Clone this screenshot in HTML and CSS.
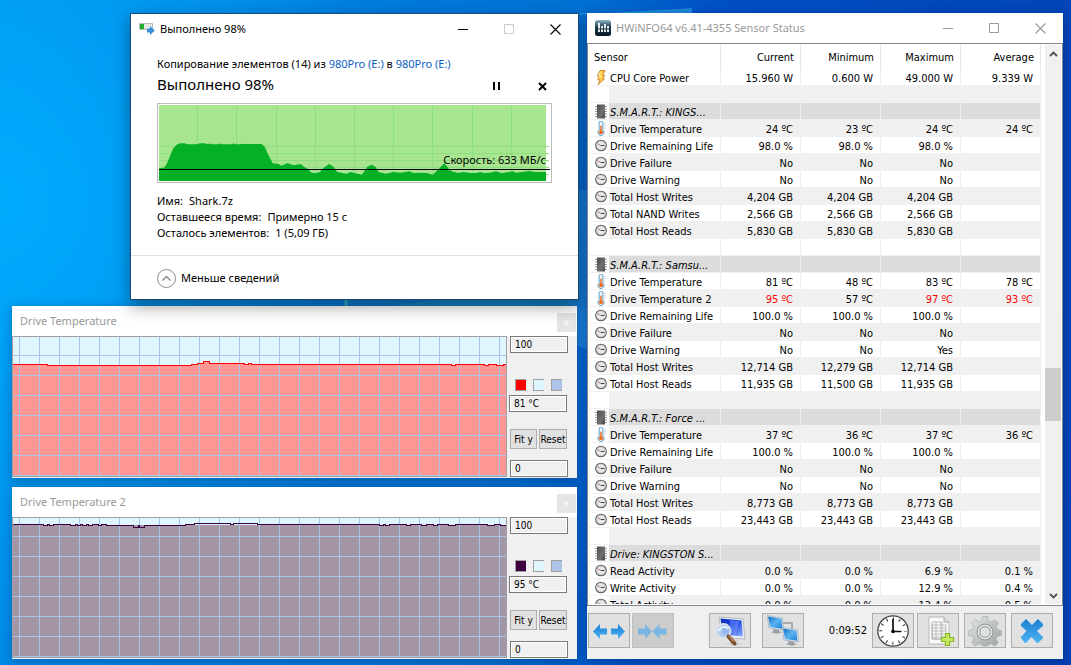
FILE: index.html
```html
<!DOCTYPE html>
<html lang="ru">
<head>
<meta charset="utf-8">
<title>Drive monitoring desktop</title>
<link rel="stylesheet" href="styles.css">
</head>
<body>
<svg class="defs" aria-hidden="true">
  <defs>
    <linearGradient id="g-chip" x1="0" y1="0" x2="1" y2="1"><stop offset="0" stop-color="#4c4c4c"/><stop offset=".6" stop-color="#707070"/><stop offset="1" stop-color="#484848"/></linearGradient>
    <linearGradient id="g-arrow" x1="0" y1="0" x2="0" y2="1"><stop offset="0" stop-color="#1b7fd0"/><stop offset="1" stop-color="#4db4f5"/></linearGradient>
    <linearGradient id="g-screen" x1="0" y1="0" x2="1" y2="1"><stop offset="0" stop-color="#0b2fb8"/><stop offset=".45" stop-color="#1a3fe0"/><stop offset="1" stop-color="#8fb4ff"/></linearGradient>
    <linearGradient id="g-mon" x1="0" y1="0" x2="1" y2="1"><stop offset="0" stop-color="#0f6fc8"/><stop offset=".5" stop-color="#5ab4f0"/><stop offset="1" stop-color="#1f80d8"/></linearGradient>
    <linearGradient id="g-gear" x1="0" y1="0" x2="1" y2="1"><stop offset="0" stop-color="#e4e8e8"/><stop offset="1" stop-color="#9ba2a2"/></linearGradient>
    <linearGradient id="g-app" x1="0" y1="0" x2="0" y2="1"><stop offset="0" stop-color="#8fb8cc"/><stop offset=".45" stop-color="#1c3848"/><stop offset="1" stop-color="#0a1a24"/></linearGradient>
    <symbol id="i-chip" viewBox="0 0 12 14"><path d="M0 2h12M0 4.500h12M0 7h12M0 9.500h12M0 12h12" stroke="#9a9a9a"/><rect x="2" width="8" height="14" fill="url(#g-chip)"/></symbol>
    <symbol id="i-temp" viewBox="0 0 12 16"><path d="M4 2a2 2 0 0 1 4 0v7.500a3.300 3.300 0 1 1-4 0z" fill="#e8f6fd" stroke="#5b9cc4"/><circle cx="6" cy="12" r="2.200" fill="#f26a1b"/><path d="M6 12V5" stroke="#f26a1b" stroke-width="1.600"/><path d="M9 2.500h2M9 5h2M9 7.500h2" stroke="#b9cfdd"/></symbol>
    <symbol id="i-clock" viewBox="0 0 14 14"><circle cx="7" cy="7" r="6.200" fill="#e9e9e9" stroke="#606060" stroke-width="1.300"/><circle cx="7" cy="7" r="4.700" fill="none" stroke="#c8c8c8"/><path d="M7 7h4" fill="none" stroke="#444" stroke-width="1.200"/><path d="M7 7 3 5" stroke="#b06a6a"/></symbol>
    <symbol id="i-bolt" viewBox="0 0 12 16"><path d="M5 .6h5.500L7.500 5.500H10L7.700 9.500H9.500L3 15.400 5 10.500H2.500L4 6.500H2z" fill="#ffd24a" stroke="#c9781f" stroke-width=".9"/><path d="m5.500 2-2 4h2l-1 3" fill="none" stroke="#fff3b8"/></symbol>
    <symbol id="i-monitor" viewBox="1 0 17 19"><path d="M1 .5 16.500 3l1 12L3 13z" fill="#e4ecf2" stroke="#9aa8b4" stroke-width=".7"/><path d="m2 1.500 13.500 2.300.8 10L4 12z" fill="url(#g-mon)"/><path d="m7 14 6 .7v1.500l3 1-5 1.500-6-1.500 2.500-1.300z" fill="#9a9fa3"/></symbol>
    <symbol id="w-min" viewBox="0 0 11 11"><path d="M0 5.500h10" stroke="currentColor"/></symbol>
    <symbol id="w-max" viewBox="0 0 11 11"><path d="M.5.500h9v9h-9z" fill="none" stroke="currentColor"/></symbol>
    <symbol id="w-close" viewBox="0 0 11 11"><path d="m.5.500 10 10m0-10-10 10" stroke="currentColor" stroke-width="1.100"/></symbol>
  </defs>
</svg>

<main class="desktop">
  <svg class="wallpaper" viewBox="0 0 1071 665" preserveAspectRatio="none" aria-hidden="true">
    <path d="M345 180H575V310H345z" fill="#1a86c8" opacity=".45"/>
    <path d="M346 296v12" stroke="#3cc8d8" stroke-width="3" opacity=".8"/>
    <path d="M370 308 575 284v24z" fill="#2fa3dc" opacity=".35"/>
    <path d="M575 190h14v118h-14z" fill="#2a8cdc" opacity=".5"/>
    <path d="M575 308h14v42l-14-5z" fill="#2a8ce0" opacity=".6"/>
    <path d="M575 15 692 8v5H575z" fill="#34a7ea" opacity=".6"/>
  </svg>

  <section class="window graph graph-one" aria-label="Drive Temperature">
    <header class="graph-title"><h2>Drive Temperature</h2><button class="graph-close" aria-label="Close">x</button></header>
    <div class="graph-body">
      <svg class="plot" viewBox="12 336 495 141" preserveAspectRatio="none" shape-rendering="crispEdges">
        <defs><pattern id="grid1" x="19" y="355" width="20" height="20" patternUnits="userSpaceOnUse"><path d="M0 0h20v1H0zM0 0h1v20H0z" fill="#adc4e4"/></pattern></defs>
        <path d="M12 336h495v141H12z" fill="#e0f6fe"/>
        <path d="M13 364.500H47v1H191v-1h6v-1h6v-2h6v2h35v1h4v-1h3v1H451v1h4v-1h29v1h4v-1h8v1h7v-1h4V477H13z" fill="#ff9696"/>
        <path d="M12 336h495v141H12z" fill="url(#grid1)"/>
        <path d="M13 364.500H47v1H191v-1h6v-1h6v-2h6v2h35v1h4v-1h3v1H451v1h4v-1h29v1h4v-1h8v1h7v-1h4" fill="none" stroke="#f00"/>
        <path d="M12.500 336.500h494v140h-494z" fill="none" stroke="#a0a0a0"/>
      </svg>
      <div class="graph-side">
        <input class="field" aria-label="Upper limit" value="100">
        <div class="swatches"><button class="swatch swatch-red" aria-label="Line colour"></button><button class="swatch swatch-pale" aria-label="Background colour"></button><button class="swatch swatch-blue" aria-label="Grid colour"></button></div>
        <input class="field field-now" aria-label="Current value" value="81 °C" readonly>
        <div class="graph-buttons"><button>Fit y</button><button>Reset</button></div>
        <input class="field" aria-label="Lower limit" value="0">
      </div>
    </div>
  </section>

  <section class="window graph graph-two" aria-label="Drive Temperature 2">
    <header class="graph-title"><h2>Drive Temperature 2</h2><button class="graph-close" aria-label="Close">x</button></header>
    <div class="graph-body">
      <svg class="plot" viewBox="12 517 495 141" preserveAspectRatio="none" shape-rendering="crispEdges">
        <defs><pattern id="grid2" x="19" y="536" width="20" height="20" patternUnits="userSpaceOnUse"><path d="M0 0h20v1H0zM0 0h1v20H0z" fill="#a9c2e8"/></pattern></defs>
        <path d="M12 517h495v141H12z" fill="#e0f6fe"/>
        <path d="M13 524.500H506V658H13z" fill="#a496a4"/>
        <path d="M12 517h495v141H12z" fill="url(#grid2)"/>
        <path d="M13 524.500H43v1h4v-1h2v1h4v-1h17v1h5v-1h2v1h3v-1h2v1h4v-1h2v1h4v-1h6v1h3v-1h5v1h27v2h5v-2h1v2h5v-2h41v-1h9v-1h36v1h3v-1h24v1H379v1h4v-1h2v1h4v-1h17v1h4v-1h11v1h5v-1h7v1h4v-1h11v1h7v-1h32v1h7v-1h6v1h6" fill="none" stroke="#3c0040"/>
        <path d="M12.500 517.500h494v140h-494z" fill="none" stroke="#a0a0a0"/>
      </svg>
      <div class="graph-side">
        <input class="field" aria-label="Upper limit" value="100">
        <div class="swatches"><button class="swatch swatch-plum" aria-label="Line colour"></button><button class="swatch swatch-pale" aria-label="Background colour"></button><button class="swatch swatch-blue" aria-label="Grid colour"></button></div>
        <input class="field field-now" aria-label="Current value" value="95 °C" readonly>
        <div class="graph-buttons"><button>Fit y</button><button>Reset</button></div>
        <input class="field" aria-label="Lower limit" value="0">
      </div>
    </div>
  </section>

  <section class="window copy" aria-label="Выполнено 98%">
    <header class="title">
      <svg class="copy-icon" viewBox="0 0 16 12"><path d="M.5.500h13v6H.500z" fill="#e6e6e6" stroke="#bbb"/><path d="M1 1h4v5H1z" fill="#1eb02c"/><path d="M8 5.500h3V3l4.800 4.500L11 12V9.500H8z" fill="#3a8fdc"/></svg>
      <h1>Выполнено 98%</h1>
      <button class="winctl" aria-label="Свернуть"><svg><use href="#w-min"/></svg></button>
      <button class="winctl winctl-off" aria-label="Развернуть" disabled><svg><use href="#w-max"/></svg></button>
      <button class="winctl" aria-label="Закрыть"><svg><use href="#w-close"/></svg></button>
    </header>
    <div class="copy-body">
      <p class="copy-what">Копирование элементов (14) из <a href="#src">980Pro (E:)</a> в <a href="#dst">980Pro (E:)</a></p>
      <div class="copy-state">
        <p>Выполнено 98%</p>
        <button aria-label="Пауза"><svg viewBox="0 0 9 9"><path d="M1 0h2v8H1zM6 0h2v8H6z"/></svg></button>
        <button aria-label="Отмена"><svg viewBox="0 0 9 9"><path d="m1 1 7 7m0-7-7 7" stroke="#000" stroke-width="2"/></svg></button>
      </div>
      <div class="speed">
        <svg viewBox="81 279 1185 240" preserveAspectRatio="none">
          <path d="M87 285h1161v228H87z" fill="#a8e591"/>
          <path d="M87 409.500h1170M87 430.500h1170M87 451.500h1170M87 472.500h1170M87 493.500h1170M202.500 285v228M319.500 285v228M439.500 285v228M556.500 285v228M673.500 285v228M790.500 285v228M907.500 285v228M1027.500 285v228M1144.500 285v228" stroke="#8cdf7c" stroke-width="3"/>
          <path d="M87 513V475L102 473 110 462 118 443 130 415 140 404 150 400H165L170 403H204L208 400H226L229 402H237L240 400 243 403H268L272 400 275 403H306L310 400 314 403H328L332 401 336 402H395L404 410 412 428 428 460 445 462 455 467 472 459 490 466 512 462 522 470 535 478 542 487 555 490 570 486 580 474 598 462 610 470 622 486 650 491 662 486 695 494 703 484 712 470 726 464 738 472 746 486 768 491 790 486 812 488 838 484 850 489 875 488 890 489 908 494 918 485 928 475 943 460 955 475 965 484 985 489 1000 486 1020 489 1040 489 1050 486 1060 489 1080 488 1098 484 1115 490 1148 484 1158 488 1198 483 1215 486H1248V513z" fill="#06b025"/>
          <path d="M87 478.500h1173" stroke="#000" stroke-width="3"/>
        </svg>
        <p>Скорость: 633 МБ/с</p>
      </div>
      <dl class="facts">
        <div><dt>Имя:</dt><dd>Shark.7z</dd></div>
        <div><dt>Оставшееся время:</dt><dd>Примерно 15 с</dd></div>
        <div><dt>Осталось элементов:</dt><dd>1 (5,09 ГБ)</dd></div>
      </dl>
    </div>
    <footer class="copy-foot">
      <button><svg viewBox="0 0 19 19"><circle cx="9.500" cy="9.500" r="9" fill="none" stroke="#8c8c8c"/><path d="m5.500 11.500 4-4 4 4" fill="none" stroke="#8c8c8c" stroke-width="1.500"/></svg>Меньше сведений</button>
    </footer>
  </section>

  <section class="window sensors" lang="en" aria-label="HWiNFO64 Sensor Status">
    <header class="title title-off">
      <svg class="app-icon" viewBox="0 0 16 16"><rect width="16" height="16" rx="2.500" fill="url(#g-app)"/><path d="M4 3v9M7 6v6M10 4v8M13 6v6" stroke="#fff" stroke-width="1.800"/><path d="M2 9h12" stroke="#1c3848" stroke-width="1"/></svg>
      <h1>HWiNFO64 v6.41-4355 Sensor Status</h1>
      <button class="winctl" aria-label="Minimize"><svg><use href="#w-min"/></svg></button>
      <button class="winctl" aria-label="Maximize"><svg><use href="#w-max"/></svg></button>
      <button class="winctl" aria-label="Close"><svg><use href="#w-close"/></svg></button>
    </header>
    <div class="pane">
      <div class="list">
        <table>
          <colgroup><col class="c-icon"><col><col class="c-val"><col class="c-val"><col class="c-val"><col class="c-val"></colgroup>
          <thead><tr><th colspan="2">Sensor</th><th>Current</th><th>Minimum</th><th>Maximum</th><th>Average</th></tr></thead>
          <tbody>
            <tr><td><svg><use href="#i-bolt"/></svg></td><td>CPU Core Power</td><td>15.960 W</td><td>0.600 W</td><td>49.000 W</td><td>9.339 W</td></tr>
            <tr><td></td><td></td><td></td><td></td><td></td><td></td></tr>
            <tr class="group"><td><svg><use href="#i-chip"/></svg></td><td>S.M.A.R.T.: KINGS...</td><td></td><td></td><td></td><td></td></tr>
            <tr><td><svg><use href="#i-temp"/></svg></td><td>Drive Temperature</td><td>24 ºC</td><td>23 ºC</td><td>24 ºC</td><td>24 ºC</td></tr>
            <tr><td><svg><use href="#i-clock"/></svg></td><td>Drive Remaining Life</td><td>98.0 %</td><td>98.0 %</td><td>98.0 %</td><td></td></tr>
            <tr><td><svg><use href="#i-clock"/></svg></td><td>Drive Failure</td><td>No</td><td>No</td><td>No</td><td></td></tr>
            <tr><td><svg><use href="#i-clock"/></svg></td><td>Drive Warning</td><td>No</td><td>No</td><td>No</td><td></td></tr>
            <tr><td><svg><use href="#i-clock"/></svg></td><td>Total Host Writes</td><td>4,204 GB</td><td>4,204 GB</td><td>4,204 GB</td><td></td></tr>
            <tr><td><svg><use href="#i-clock"/></svg></td><td>Total NAND Writes</td><td>2,566 GB</td><td>2,566 GB</td><td>2,566 GB</td><td></td></tr>
            <tr><td><svg><use href="#i-clock"/></svg></td><td>Total Host Reads</td><td>5,830 GB</td><td>5,830 GB</td><td>5,830 GB</td><td></td></tr>
            <tr><td></td><td></td><td></td><td></td><td></td><td></td></tr>
            <tr class="group"><td><svg><use href="#i-chip"/></svg></td><td>S.M.A.R.T.: Samsu...</td><td></td><td></td><td></td><td></td></tr>
            <tr><td><svg><use href="#i-temp"/></svg></td><td>Drive Temperature</td><td>81 ºC</td><td>48 ºC</td><td>83 ºC</td><td>78 ºC</td></tr>
            <tr><td><svg><use href="#i-temp"/></svg></td><td>Drive Temperature 2</td><td class="hot">95 ºC</td><td>57 ºC</td><td class="hot">97 ºC</td><td class="hot">93 ºC</td></tr>
            <tr><td><svg><use href="#i-clock"/></svg></td><td>Drive Remaining Life</td><td>100.0 %</td><td>100.0 %</td><td>100.0 %</td><td></td></tr>
            <tr><td><svg><use href="#i-clock"/></svg></td><td>Drive Failure</td><td>No</td><td>No</td><td>No</td><td></td></tr>
            <tr><td><svg><use href="#i-clock"/></svg></td><td>Drive Warning</td><td>No</td><td>No</td><td>Yes</td><td></td></tr>
            <tr><td><svg><use href="#i-clock"/></svg></td><td>Total Host Writes</td><td>12,714 GB</td><td>12,279 GB</td><td>12,714 GB</td><td></td></tr>
            <tr><td><svg><use href="#i-clock"/></svg></td><td>Total Host Reads</td><td>11,935 GB</td><td>11,500 GB</td><td>11,935 GB</td><td></td></tr>
            <tr><td></td><td></td><td></td><td></td><td></td><td></td></tr>
            <tr class="group"><td><svg><use href="#i-chip"/></svg></td><td>S.M.A.R.T.: Force ...</td><td></td><td></td><td></td><td></td></tr>
            <tr><td><svg><use href="#i-temp"/></svg></td><td>Drive Temperature</td><td>37 ºC</td><td>36 ºC</td><td>37 ºC</td><td>36 ºC</td></tr>
            <tr><td><svg><use href="#i-clock"/></svg></td><td>Drive Remaining Life</td><td>100.0 %</td><td>100.0 %</td><td>100.0 %</td><td></td></tr>
            <tr><td><svg><use href="#i-clock"/></svg></td><td>Drive Failure</td><td>No</td><td>No</td><td>No</td><td></td></tr>
            <tr><td><svg><use href="#i-clock"/></svg></td><td>Drive Warning</td><td>No</td><td>No</td><td>No</td><td></td></tr>
            <tr><td><svg><use href="#i-clock"/></svg></td><td>Total Host Writes</td><td>8,773 GB</td><td>8,773 GB</td><td>8,773 GB</td><td></td></tr>
            <tr><td><svg><use href="#i-clock"/></svg></td><td>Total Host Reads</td><td>23,443 GB</td><td>23,443 GB</td><td>23,443 GB</td><td></td></tr>
            <tr><td></td><td></td><td></td><td></td><td></td><td></td></tr>
            <tr class="group"><td><svg><use href="#i-chip"/></svg></td><td>Drive: KINGSTON S...</td><td></td><td></td><td></td><td></td></tr>
            <tr><td><svg><use href="#i-clock"/></svg></td><td>Read Activity</td><td>0.0 %</td><td>0.0 %</td><td>6.9 %</td><td>0.1 %</td></tr>
            <tr><td><svg><use href="#i-clock"/></svg></td><td>Write Activity</td><td>0.0 %</td><td>0.0 %</td><td>12.9 %</td><td>0.4 %</td></tr>
            <tr><td><svg><use href="#i-clock"/></svg></td><td>Total Activity</td><td>0.0 %</td><td>0.0 %</td><td>13.4 %</td><td>0.5 %</td></tr>
          </tbody>
        </table>
      </div>
      <div class="scroll">
        <button aria-label="Scroll up"><svg viewBox="0 0 9 6"><path d="m1 5 3.500-3.500L8 5" fill="none" stroke="#505050" stroke-width="1.800"/></svg></button>
        <div class="track"><span class="thumb"></span></div>
        <button aria-label="Scroll down"><svg viewBox="0 0 9 6"><path d="m1 1 3.500 3.500L8 1" fill="none" stroke="#505050" stroke-width="1.800"/></svg></button>
      </div>
    </div>
    <footer class="tools">
      <div class="tool-set">
        <button aria-label="Expand columns"><svg viewBox="0 0 36 32"><path d="M2 16.500 9 9v4.500h7v6H9V24zM34 16.500 27 9v4.500h-7v6h7V24z" fill="url(#g-arrow)"/></svg></button>
        <button class="tool-off" aria-label="Shrink columns" disabled><svg viewBox="0 0 36 32"><path d="M17 16.500 10 9v4.500H3v6h7V24zM17.500 16.500l7-7.500v4.500h7v6h-7V24z" fill="#79b6e2"/></svg></button>
      </div>
      <div class="tool-set tool-mid">
        <button aria-label="System summary"><svg viewBox="0 0 36 32"><path d="m7 2 24 2 2 20-23-2z" fill="#eef1f4" stroke="#a8b0b8" stroke-width=".8"/><path d="m8.500 3.500 21 2 1.500 16-20-2z" fill="url(#g-screen)"/><path d="m18 5 9 1-3 14-6-1z" fill="#7fa4ff" opacity=".45"/><path d="m18 24 8 .5v3l5 1.500-7 2-11-2 5-2z" fill="#d4d4d4"/><circle cx="11.500" cy="16" r="7" fill="#a9cdf0" fill-opacity=".85" stroke="#d9e2ea" stroke-width="1.800"/><path d="M7 16a5 5 0 0 1 9-2" stroke="#e7f4ff" stroke-width="2" fill="none"/><path d="m16.500 21.500 6 7" stroke="#7a4a2a" stroke-width="4" stroke-linecap="round"/><path d="m17 21 5 6" stroke="#c08a60" stroke-width="1.200"/></svg></button>
        <button aria-label="Remote sensors"><svg viewBox="0 0 36 32"><path d="M17 8h10v8" fill="none" stroke="#999" stroke-width="1.500"/><use href="#i-monitor" x="2" y="0" width="17" height="19"/><use href="#i-monitor" x="17" y="12" width="17" height="19"/></svg></button>
      </div>
      <div class="tool-set tool-end">
        <time>0:09:52</time>
        <button aria-label="Reset timer"><svg viewBox="0 0 36 32"><circle cx="18" cy="16" r="15.200" fill="#fff" stroke="#444" stroke-width="1.300"/><circle cx="18" cy="16" r="12.300" fill="none" stroke="#333" stroke-width="3" stroke-dasharray="1 5.440" stroke-dashoffset=".5"/><path d="M18 17V4M18 16.500h8.500" stroke="#111" stroke-width="1.700"/><circle cx="18" cy="16.500" r="1.800"/></svg></button>
        <button aria-label="Start logging"><svg viewBox="0 0 36 32"><path d="M9 2h15l5 5v22H9z" fill="#fafafa" stroke="#b8b8b8"/><path d="M24 2v5h5" fill="#ddd" stroke="#aaa"/><path d="M12 7h10v17H12zM12 10h14v14H12zM12 13h14M12 16h14M12 19h14M12 22h14M16 7v17M21 7v17" fill="none" stroke="#b4b4b4" stroke-width=".9"/><path d="M25.500 18.500h4v4h4v4h-4v4h-4v-4h-4v-4h4z" fill="#c6e860" stroke="#83b81f" stroke-width="1.200"/></svg></button>
        <button class="tool-gap" aria-label="Settings"><svg viewBox="0 0 36 32"><path d="m15.500 1.500 5 0 .8 4.200 2.800 1.200 3.600-2.300 3.600 3.600-2.300 3.600 1.200 2.800 4 .9v5l-4 .9-1.200 2.800 2.300 3.400-3.600 3.400-3.600-2.300-2.800 1.200-.8 1.100h-5l-.8-1.100-2.800-1.200-3.600 2.300-3.600-3.400 2.300-3.400-1.200-2.800-4-.9v-5l4-.9 1.200-2.800-2.300-3.600 3.600-3.600 3.600 2.300 2.800-1.200z" fill="url(#g-gear)" stroke="#a8aeae" stroke-width=".7"/><circle cx="18" cy="17" r="8" fill="#c3c8c8" stroke="#8c9393" stroke-width=".8"/><circle cx="18" cy="17" r="6.500" fill="none" stroke="#eef0f0"/><circle cx="18" cy="17" r="5.200" fill="#e1e1e1" stroke="#8b9292" stroke-width=".8"/></svg></button>
        <button class="tool-gap" aria-label="Close sensors"><svg viewBox="0 0 36 32"><path d="m7 9 5-5 6 6 6-6 5 5v2l-6 5 6 6v1l-5 5h-1l-5.500-6L12 28h-1l-4-5v-1l5.500-6L7 11z" fill="url(#g-arrow)"/></svg></button>
      </div>
    </footer>
  </section>
</main>
</body>
</html>
```
FILE: styles.css
```css
* { box-sizing: border-box; }

html, body { height: 100%; }

body {
  margin: 0;
  overflow: hidden;
  color: #000;
  font: 11px/16px "Noto Sans", "Open Sans", sans-serif;
}

h1, h2, p, dl, dd { margin: 0; font-weight: 400; }

button, input { font: inherit; color: inherit; border-radius: 0; }

button { padding: 0; border: 0; background: none; }

.defs { position: absolute; width: 0; height: 0; }

.desktop {
  position: relative;
  height: 100%;
  min-height: 665px;
  overflow: hidden;
  background:
    radial-gradient(ellipse 420px 460px at 0 200px, rgba(0, 174, 255, .9), rgba(0, 174, 255, 0)),
    linear-gradient(97deg, #0090ea 0%, #0080e2 25%, #0072d4 50%, #0050c4 62%, #0242b6 100%);
}

.wallpaper { position: absolute; inset: 0; width: 100%; height: 100%; }

.window {
  position: absolute;
  display: flex;
  flex-direction: column;
  background: #fff;
  box-shadow: 0 2px 10px rgba(0, 20, 60, .35);
}

/* Title bars */
.title {
  display: flex;
  align-items: center;
  height: 30px;
  padding-left: 8px;
  flex: none;
}

.title h1 { flex: 1; font-size: 11px; white-space: nowrap; }
.title-off { color: #999; }

.winctl {
  display: flex;
  align-items: center;
  justify-content: center;
  width: 46px;
  height: 28px;
}

.winctl svg { width: 11px; height: 11px; }
.winctl-off { color: #ccc; }

/* File copy */
.copy {
  left: 130px;
  top: 13px;
  width: 449px;
  border: 1px solid #1b4a78;
  box-shadow: 0 6px 16px rgba(0, 0, 0, .4);
}

.copy-icon { width: 16px; height: 12px; margin-right: 5px; }

.copy-body { padding: 12px 26px 0; }
.copy-body a { color: #0a60c8; text-decoration: none; }

.copy-state { display: flex; align-items: center; height: 24px; margin-bottom: 7px; }
.copy-state p { flex: 1; font-size: 15px; line-height: 24px; }
.copy-state button { width: 23px; height: 20px; margin-left: 23px; }
.copy-state button:first-of-type { margin-left: 0; }
.copy-state button svg { display: block; width: 9px; height: 9px; margin: 5px auto 0 9px; }

.speed { position: relative; height: 80px; border: 1px solid #bcbcbc; }
.speed svg { display: block; width: calc(100% + 2px); height: 80px; margin: -1px; }
.speed p { position: absolute; right: 5px; bottom: 14px; }

.facts { padding: 10px 0 14px; }
.facts div { display: flex; gap: 6px; }

.copy-foot { border-top: 1px solid #dfdfdf; padding: 12px 26px 11px; }
.copy-foot button { display: flex; align-items: center; gap: 5px; height: 20px; }
.copy-foot svg { width: 19px; height: 19px; }

/* Temperature graphs */
.graph { left: 12px; width: 565px; }
.graph-one { top: 306px; }
.graph-two { top: 487px; }

.graph-title {
  display: flex;
  align-items: center;
  justify-content: space-between;
  height: 30px;
  padding: 0 1px 0 8px;
  color: #999;
}

.graph-title h2 { font-size: 11px; }

.graph-close {
  width: 19px;
  height: 19px;
  margin-top: 2px;
  background: #e5e5e5;
  color: #fff;
  font-size: 10px;
  line-height: 16px;
}

.graph-body { display: flex; height: 142px; background: #f0f0f0; }
.plot { flex: 1; min-width: 0; height: 141px; }

.graph-side {
  display: flex;
  flex-direction: column;
  width: 70px;
  padding: 0 9px 0 3px;
  font: 10px/13px "DejaVu Sans Condensed", "DejaVu Sans", sans-serif;
}

.field {
  width: 100%;
  height: 17px;
  padding: 0 4px;
  border: 1px solid #7a7a7a;
  background: #f0f0f0;
  box-shadow: inset 0 0 0 1px #fff;
}

.field-now { margin: 4px 1px 17px -1px; }

.swatches { display: flex; gap: 7px; margin: 26px 0 0 5px; }
.swatch { width: 11px; height: 12px; border: solid #a0a0a0; border-width: 1px 0 1px 1px; }
.swatch-red { background: #f00; }
.swatch-plum { background: #3c0040; }
.swatch-pale { background: #e0f6fe; }
.swatch-blue { background: #adc4e8; }

.graph-buttons { display: flex; gap: 2px; margin-bottom: 11px; }
.graph-buttons button { width: 27px; height: 20px; border: 1px solid #adadad; background: #e1e1e1; white-space: nowrap; }
.graph-buttons button:last-child { width: 28px; }

/* Sensor list */
.sensors {
  left: 587px;
  right: 8px;
  top: 13px;
  bottom: 6px;
  background: #f0f0f0;
  font: 11px/16px "DejaVu Sans Condensed", "DejaVu Sans", sans-serif;
}

.sensors .title { background: #fff; font-family: "Noto Sans", "Open Sans", sans-serif; }
.app-icon { width: 16px; height: 16px; margin-right: 5px; }

.pane {
  display: flex;
  flex: 1;
  min-height: 0;
  border: 1px solid #828790;
  padding: 1px;
  background: #fff;
}

.list { flex: 1; min-width: 0; overflow: hidden; padding-right: 4px; }

table { width: 100%; border-collapse: separate; border-spacing: 0; table-layout: fixed; }
.c-icon { width: 20px; }
.c-val { width: 80px; }

th {
  height: 24px;
  padding: 2px 6px 0 0;
  font-weight: 400;
  text-align: right;
  border-right: 1px solid #e5e5e5;
}

th:first-child { text-align: left; padding-left: 5px; }

td {
  height: 17px;
  padding: 3px 7px 0 0;
  line-height: 13px;
  text-align: right;
  white-space: nowrap;
  border: solid #f0f0f0;
  border-width: 0 1px 1px 0;
}

td:nth-child(1) { padding: 0 0 0 6px; border-right: 0; }
td:nth-child(2) { padding-left: 1px; padding-right: 0; text-align: left; }
td svg { display: block; width: 12px; height: 15px; }

tbody tr:nth-child(even) td:not(:first-child) { background: #f0f0f0; }
tbody tr.group td:not(:first-child) { background: #dcdcdc; }
.group { font-style: italic; }
.hot { color: #f00; }

.scroll { display: flex; flex-direction: column; width: 16px; background: #f0f0f0; }
.scroll button { height: 17px; }
.scroll svg { width: 9px; height: 6px; }
.track { flex: 1; display: flex; flex-direction: column; }
.track::before { content: ""; flex: 306 0 0; }
.track::after { content: ""; flex: 166 0 0; }
.thumb { flex: 53 0 0; background: #cdcdcd; }

.tools { display: flex; align-items: flex-start; padding: 7px 10px 11px 1px; }
.tool-set { display: flex; align-items: center; gap: 2px; }
.tool-set button {
  width: 42px;
  height: 35px;
  border: 1px solid #adadad;
  background: #e1e1e1;
}

.tool-set svg { display: block; width: 36px; height: 32px; margin: auto; }
.tool-set .tool-off { background: #ccc; border-color: #bfbfbf; }
.tool-mid { margin-left: 35px; gap: 11px; }
.tool-end { margin-left: auto; gap: 3px; }
.tool-end time { margin-right: 2px; }
.tool-end .tool-gap { margin-left: 2px; }
```
